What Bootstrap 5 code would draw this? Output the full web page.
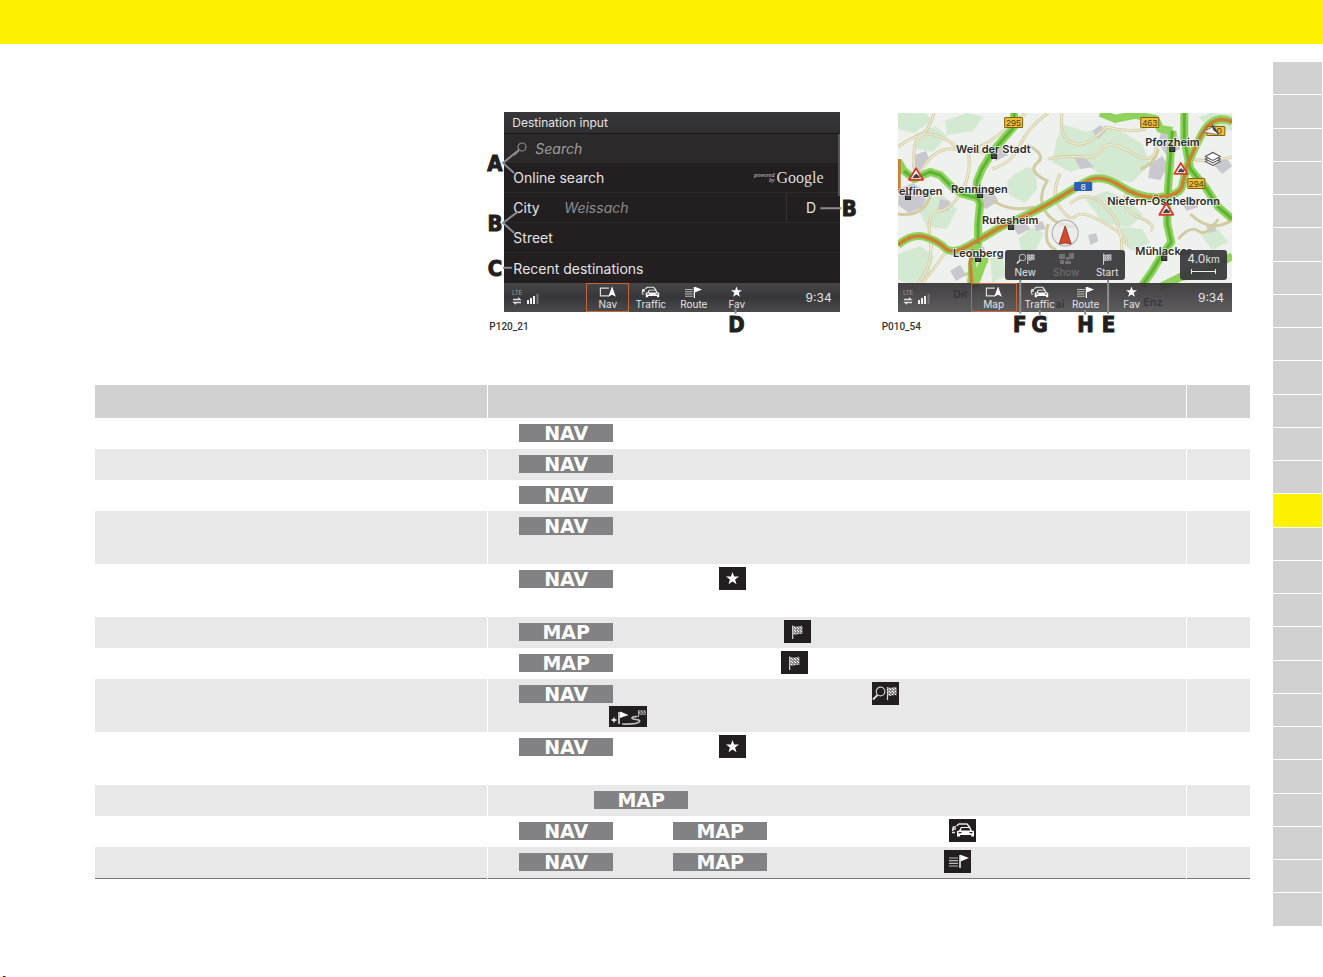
<!DOCTYPE html>
<html lang="en">
<head>
<meta charset="utf-8">
<meta name="viewport" content="width=device-width, initial-scale=1">
<title>Navigation – quick reference</title>
<link href="https://cdn.jsdelivr.net/npm/bootstrap@5.3.0/dist/css/bootstrap.min.css" rel="stylesheet">
<style>
  body { font-family: "Inter", "Liberation Sans", sans-serif; background: #fff; }
  .top-band { height: 44px; background: #fff200; }
  .sheet { padding: 18px 1px 0 95px; gap: 23px; }
  .sheet-body { padding: 50px 0 47px; min-width: 0; }
  .thumb-index { width: 49px; gap: 1px; }
  .thumb-index li { background: #d1d1d1; }
  .thumb-index li.current { background: #fff200; }

  /* figures */
  .figures { display: grid; grid-template-columns: repeat(3, minmax(0, 1fr)); column-gap: 22px; align-items: end; margin-bottom: 51px; }
  .figures figure:first-child { grid-column: 2; }
  .unit { height: 200px; margin: 0 18px 0 17px; background: #231f20; color: #e4e4e4; overflow: hidden; }
  .unit.map-unit { height: 199px; margin: 0 18px; }
  .unit button { background: none; border: 0; padding: 0; color: inherit; }
  .fig-no { font: 500 10px/14px Roboto, sans-serif; padding: 8px 0 0 2px; color: #333; }
  .callouts { left: 0; top: 0; pointer-events: none; overflow: visible; }
  .callouts text { font: bold 22px "Liberation Sans Narrow", "DejaVu Sans Condensed", sans-serif; fill: #231f20; stroke: #231f20; stroke-width: 1; text-anchor: middle; }
  .callouts path { stroke: #8d8d8f; stroke-width: 2; fill: none; }
  .unit-title { height: 22px; font-size: 12px; line-height: 22px; padding-left: 8px; background: linear-gradient(#373638, #2f2e30); border-bottom: 1px solid #1b191a; }
  .unit-row { height: 30px; font-size: 14px; padding-left: 9px; border-bottom: 1px solid #2d292a; }
  .unit-row.find { height: 29px; background: #2b292a; border: 0; }
  .unit-row.last { border: 0; }
  .unit-row input { background: none; border: 0; padding: 0; outline: 0; font-style: italic; color: #8e8c8d; font-size: 14px; min-width: 0; flex: 1; }
  .unit-row input::placeholder { color: #a09e9f; }
  .unit-row label { width: 51px; }
  .unit .land { width: 54px; height: 30px; border-left: 1px solid #343132; padding-right: 4px; }
  .powered { font: italic 6px/5px "Liberation Serif", serif; text-align: right; color: #ccc; }
  .goog { font: 16px/20px "Liberation Serif", serif; padding: 0 16px 0 2px; color: #ddd; }
  .scroller { right: 0; top: 22px; width: 2px; height: 62px; background: #565456; }
  .soft-bar { height: 29px; background: linear-gradient(#464547, #373638 50%, #4a494b); font-size: 10px; line-height: 11px; }
  .soft-bar .status { width: 82px; padding-left: 8px; }
  .soft-bar button { width: 43px; height: 29px; font-size: 10px; line-height: 11px; }
  .soft-bar button.on { border: 1px solid #c4653a; }
  .soft-bar svg { display: block; margin: 0 auto 1px; }
  .soft-bar .status svg { margin: 0; }
  .clock { font-size: 12px; padding-right: 8px; }
  .map-unit .soft-bar { left: 0; right: 0; bottom: 0; background: linear-gradient(rgba(52,50,52,.92), rgba(62,60,62,.82)); }
  .map-unit .soft-bar .status { width: 73px; padding-left: 5px; }
  .map-unit .soft-bar button { width: 46px; }
  .pop { left: 107px; bottom: 32px; width: 120px; height: 30px; border-radius: 3px; background: rgba(58,57,59,.95); }
  .pop button { width: 41px; flex: none; font-size: 10px; line-height: 12px; }
  .pop button:disabled { color: #737173; }
  .pop svg { display: block; margin: 0 auto 1px; }
  .scale-box { right: 5px; bottom: 32px; width: 47px; height: 30px; border-radius: 3px; background: rgba(58,57,59,.95); font-size: 12px; line-height: 18px; }
  .scale-box small { font-size: 10px; }
  .place { font: 600 11px Inter, sans-serif; fill: #2c2c2c; stroke: #fff; stroke-opacity: .6; stroke-width: 2; paint-order: stroke; }
  .shield { font: 500 9px "Liberation Sans", sans-serif; text-anchor: middle; fill: #4d3b08; }

  /* function table */
  .functions { width: 100%; table-layout: fixed; border-bottom: 1px solid #777; }
  .functions .c-name { width: 34%; }
  .functions .c-page { width: 64px; }
  .functions th { height: 33px; background: #d1d1d1; }
  .functions td { height: 31px; padding: 0; vertical-align: top; }
  .functions .tall td { height: 53px; }
  .functions tr > :not(:last-child) { border-right: 1px solid #fff; }
  .functions tbody tr:nth-child(even) td { background: #e8e8e8; }
  .steps { padding: 3px 0 0 31px; height: 27px; }
  .steps.more { padding: 0 0 0 121px; height: 21px; }
  .hardkey { width: 94px; height: 18px; margin-top: 3px; background: #828284; color: #fff; font: bold 19px/18px "DejaVu Sans", sans-serif; text-align: center; flex: none; }
  .glyph { width: 27px; height: 23px; background: #231f20; flex: none; }
  .glyph.wide { width: 38px; height: 21px; }
  .w60 { width: 60px; } .w75 { width: 75px; } .w106 { width: 106px; } .w168 { width: 168px; }
  .w171 { width: 171px; } .w177 { width: 177px; } .w182 { width: 182px; } .w259 { width: 259px; }
  .reg-mark { width: 4px; height: 1px; margin-left: 2px; background: linear-gradient(90deg, #fff200 25%, #222 25% 75%, #0cc 75%); }
</style>
</head>
<body class="d-flex flex-column min-vh-100">

<svg width="0" height="0" class="position-absolute" aria-hidden="true">
  <defs>
    <pattern id="chk" width="3" height="3" patternUnits="userSpaceOnUse"><path d="M0 0h1.5v1.5H0zM1.5 1.5H3V3H1.5z" fill="#fff"/><path d="M1.5 0H3v1.5H1.5zM0 1.5h1.5V3H0z" fill="#8a8889"/></pattern>
    <symbol id="star" viewBox="0 0 12 12"><path fill="#fff" d="M6 0l1.5 4.2H12L8.400 6.900 9.700 11.300 6 8.700 2.300 11.300 3.600 6.900 0 4.200h4.500z"/></symbol>
    <symbol id="flag" viewBox="0 0 11 14"><path d="M.7.5V14" stroke="#ddd" stroke-width="1.200"/><path d="M1 .8q2.500 1.200 4.800.5T10.500 1v8q-2.500-.6-4.700.2T1 9z" fill="url(#chk)"/></symbol>
    <symbol id="find-flag" viewBox="0 0 25 15"><circle cx="8.500" cy="5.500" r="4.300" fill="none" stroke="#ccc" stroke-width="1.200"/><path d="M5.500 9L1 13.500" stroke="#ddd" stroke-width="2"/><path d="M15.500 1v13" stroke="#ddd" stroke-width="1.200"/><path d="M15.500 1q2.500 1 4.500.4t4.500-.2v8q-2.500-.6-4.500.2t-4.500-.2z" fill="url(#chk)"/></symbol>
    <symbol id="via" viewBox="0 0 38 21"><path d="M2.500 14h5M5 11.500v5" stroke="#fff" stroke-width="1.300"/><path d="M10 6v12" stroke="#eee" stroke-width="1.500"/><path d="M11 5.500l8.500 3.500-8.500 3z" fill="#fff"/><path d="M13 18c8 .3 16 0 17.500-2.500 1.200-2.500-7-1.500-7.500-3.500 0-1.600 4-1.200 5.500-1.700" fill="none" stroke="#bbb" stroke-width="1.700"/><path d="M29.500 4v7" stroke="#aaa"/><path d="M30 4h7v5h-7z" fill="url(#chk)" opacity=".65"/></symbol>
    <symbol id="cars" viewBox="0 0 24 14"><path d="M1.500 8l.8-4H5M2 6h3M1 9.500h3M5.500 3L8 1h8l3 3.500" fill="none" stroke="#e8e8e8" stroke-width="1.500"/><path fill="#fff" fill-rule="evenodd" d="M6 8l2-.3L10 4h9l2 3.700 2 .3v5.500h-2.800V12H9v1.500H6zM10.800 5L9.700 7.600h9.600L18.200 5zM7.500 9v1.300h3V9zm11 0v1.300h3V9z"/></symbol>
    <symbol id="route" viewBox="0 0 20 14"><path d="M0 4h9M0 6.700h9M0 9.400h9M0 12h9" stroke="#bbb" stroke-width="1.200"/><path d="M11 1v13" stroke="#fff" stroke-width="1.500"/><path fill="#fff" d="M11.500.8L20 4l-8.500 3.500z"/></symbol>
    <symbol id="here" viewBox="0 0 18 12"><path d="M10.500 2H1.500v8h9" fill="none" stroke="#ddd" stroke-width="1.300"/><path fill="#fff" d="M13.800 0l4 11-4-2-4 2z"/></symbol>
    <symbol id="lens" viewBox="0 0 14 14"><circle cx="9" cy="5" r="4" fill="none" stroke="#8c8a8b" stroke-width="1.200"/><path d="M6 8l-5 5" stroke="#8c8a8b" stroke-width="1.800"/></symbol>
    <symbol id="signal" viewBox="0 0 28 18"><text x="0" y="6" font-size="6.500" fill="#999" font-family="Roboto, sans-serif">LTE</text><path d="M1 10.500h7l-2-1.700M9 13.500H2l2 1.700" fill="none" stroke="#ddd" stroke-width="1.300"/><path d="M15 11h2v4h-2zM18 9h2v6h-2zM21 7h2v8h-2z" fill="#eee"/><path d="M24.500 5h2v10h-2z" fill="#777"/></symbol>
    <symbol id="blocks" viewBox="0 0 15 12"><path fill="#737173" d="M0 1h6v5H0zM1 7h4v4H1zM7 4h3v3H7zM10 0h5v6h-5zM6 8h6v3H6z"/></symbol>
    <symbol id="warn" viewBox="0 0 16 14"><path d="M8 1.200L15 12.800H1z" fill="#fff" stroke="#dc3a2c" stroke-width="1.900" stroke-linejoin="round"/><path d="M4.500 11h7V8.500H10L8.500 6.500 6.500 8z" fill="#444"/></symbol>
  </defs>
</svg>

<header class="top-band flex-shrink-0"></header>

<div class="sheet d-flex">
  <main class="sheet-body flex-grow-1">
    <section class="figures">
      <figure class="position-relative m-0">
        <div class="unit position-relative">
          <div class="unit-title">Destination input</div>
          <div class="unit-row find d-flex align-items-center">
            <svg width="14" height="14" class="me-2 flex-shrink-0"><use href="#lens"/></svg>
            <input type="search" placeholder="Search" aria-label="Search">
          </div>
          <div class="unit-row d-flex align-items-center"><button type="button" class="me-auto">Online search</button><span class="powered">powered<br>by</span><span class="goog">Google</span></div>
          <div class="unit-row d-flex align-items-center"><label for="city">City</label><input id="city" type="text" value="Weissach"><button type="button" class="land">D</button></div>
          <div class="unit-row d-flex align-items-center"><button type="button">Street</button></div>
          <div class="unit-row last d-flex align-items-center"><button type="button">Recent destinations</button></div>
          <div class="scroller position-absolute"></div>
          <div class="soft-bar d-flex align-items-center">
            <span class="status"><svg width="28" height="18"><use href="#signal"/></svg></span>
            <button type="button" class="on"><svg width="17" height="12"><use href="#here"/></svg>Nav</button>
            <button type="button"><svg width="19" height="12"><use href="#cars"/></svg>Traffic</button>
            <button type="button"><svg width="17" height="12"><use href="#route"/></svg>Route</button>
            <button type="button"><svg width="11" height="12"><use href="#star"/></svg>Fav</button>
            <span class="clock ms-auto">9:34</span>
          </div>
        </div>
        <figcaption class="fig-no">P120_21</figcaption>
        <svg class="callouts position-absolute w-100" viewBox="487 112 371 222">
          <path d="M519 150L503 163L514 173M518 212L503 223L514 233M503 268H512M821 208.500H842M736 309V314"/>
          <text x="495" y="171">A</text><text x="495" y="231">B</text><text x="495" y="276">C</text><text x="850" y="216">B</text><text x="737" y="332">D</text>
        </svg>
      </figure>

      <figure class="position-relative m-0">
        <div class="unit map-unit position-relative">
          <svg class="w-100 h-100 d-block" viewBox="898 114 334 199" preserveAspectRatio="xMidYMid slice">
            <path fill="#eff1ee" d="M898 114h334v199H898z"/>
            <g fill="#d3e9d2">
              <path d="M898 114h28l6 8-18 12-16-4zM915 135l20-8 12 10-14 16-20-4zM945 122l22-8 16 4-10 14-26 4zM1015 175l12-7 8 2 2 20-12 14-16-8-2-14zM1062 125l24 8 18-6 22 8 16 10 8 20-18 18-24-2-20-14-18 6-18-10 4-20zM898 255l22-8 14 10-6 20-16 8-14-4zM1018 240l14-12 12 6-8 16-14 4zM1085 200l22-8 22 10 14 14-14 12-26-4zM1198 118l14-4 20 2v16l-22-4zM1200 235l16-6 12 14-16 8zM925 200l18-4 14 14-10 20-20-2-8-16zM1122 228l20 2 8 14-18 8-12-10zM990 258l12-4 4 22-14 8z"/>
            </g>
            <g fill="#c9c8ce">
              <path d="M914 156l12-4 4 10-10 10-8-4zM988 150l14-2 6 8-12 6zM978 186l14 4 6 12-12 8-12-8zM899 190l14-6 14 10-4 14-14 6-11-8zM940 200l10 2-2 10-10-2zM1150 165l12-8 6 10-8 14-12-2zM1162 128l14 4 4 18-14 6-8-12zM1074 158l12 2 8 8-14 2zM1092 132l8-6 6 6-8 8zM1010 224l14-4 6 10-12 6zM950 272l10-6 6 10-10 6zM1034 226l8-4 4 8-10 2zM1180 200l12-2 6 10-12 4zM1212 165l14-6 6 8-10 8zM1088 236l8-2 2 8-8 4zM1206 226l8-2 2 8-8 2zM968 246l16 2 2 12-14 4z"/>
            </g>
            <g fill="none" stroke="#d2cca4" stroke-width="3">
              <path d="M934 114q-4 16-14 24t-4 40M898 148q22-16 36-12t22 12q20 6 40-10t30-24M918 178q14-30 36-28t32 4M968 150q4 24-6 42t-24 20-6 38M1048 114q-20 14-28 32t-28 24M1027 146q20 10 10 18t10 18q-10 16-2 30t30 16M1048 160q20-4 34-2t20-8 30 4 24-8M1062 114q-4 24 10 30t34-16q20 6 40 2M1060 175q-10 20 0 34t16 8 30 8 20 22M1048 225q-6 20 8 26M1070 205q14-14 30-2t20 30-2 40M1128 190q-10 20 10 28t12 14M1190 160q20 4 42-2M1190 215q20 20 42 6M1178 240q12-14 20-8t20-12M930 240q4 26-12 44M948 250q-14 20-26 34M988 262q-14 10-24 14M898 215q26 4 34-22M990 200q20 14 44 8M1140 170q14-4 18-20"/>
            </g>
            <g fill="none" stroke="#f0ecd4" stroke-width="1.300">
              <path d="M934 114q-4 16-14 24t-4 40M898 148q22-16 36-12t22 12q20 6 40-10t30-24M918 178q14-30 36-28t32 4M968 150q4 24-6 42t-24 20-6 38M1048 114q-20 14-28 32t-28 24M1048 160q20-4 34-2t20-8 30 4 24-8M1062 114q-4 24 10 30t34-16q20 6 40 2M1060 175q-10 20 0 34t16 8 30 8 20 22M1070 205q14-14 30-2t20 30-2 40M1128 190q-10 20 10 28t12 14M1190 160q20 4 42-2M930 240q4 26-12 44M948 250q-14 20-26 34"/>
            </g>
            <g fill="none" stroke-linejoin="round">
              <g stroke="#8fd35c" stroke-width="8">
                <path d="M1014 114v14l-9 10-12 14-11 18-5 12-1 13 4 10-2 20v20l-5 12-2 28M985 258l-12 32M898 162l6 10 10 8 16-7 10 3 12 12 10 7 15 4M1184 114v26l6 30 15 18 13 20 14 12M1172 132l-2 28-3 40v25l4 18-10 14-9 15-10 14M1100 114l15 6 20-4 20 4 5 10 12 2M1160 288l20-10 20-3 32-18"/>
                <path d="M898 246q14-12 27-8t20 11 23-2 24-14 28-14 35-18 30-18 35 4 40 11 22-11 4-17 14-32 32-15"/>
              </g>
              <path stroke="#5cb335" stroke-width="3" d="M1014 114v14l-9 10-12 14-11 18-5 12-1 13 4 10-2 20v20M904 172l10 8 16-7 10 3 12 12 10 7 15 4M1184 114v26l6 30 15 18 13 20 14 12M1172 132l-2 28-3 40v25l4 18-10 14-9 15-10 14"/>
              <path stroke="#cc8034" stroke-width="3.500" d="M898 246q14-12 27-8t20 11 23-2 24-14 28-14 35-18 30-18 35 4 40 11 22-11 4-17 14-32 32-15M973 250l-3 14 2 24M899 160v34"/>
            </g>
            <circle cx="1065" cy="234" r="13" fill="#e9e9e9" fill-opacity=".7" stroke="#aaa"/>
            <path d="M1065 227l6 18-6-1-6 1z" fill="#d54a2c" stroke="#8f2a18" stroke-width=".8"/>
            <g fill="#444" stroke="#222"><path d="M991.500 154.500h5v5h-5zM905.500 195.500h5v5h-5zM977.500 193.500h5v5h-5zM1008.500 225.500h5v5h-5zM975.500 257.500h5v5h-5zM1169.500 147.500h5v5h-5zM1161.500 256.500h5v5h-5z"/></g>
            <g class="place">
              <text x="956" y="154">Weil der Stadt</text><text x="899" y="196">elfingen</text><text x="951" y="194">Renningen</text><text x="982" y="225">Rutesheim</text><text x="953" y="258">Leonberg</text><text x="1145" y="147">Pforzheim</text><text x="1107" y="206">Niefern-Öschelbronn</text><text x="1135" y="256">Mühlacker</text>
              <text x="953" y="299">Dit</text><text x="1055" y="309">ai</text><text x="1143" y="307">Enz</text>
            </g>
            <g stroke="#7d6310" fill="#f0bd3a"><rect x="1004.500" y="118.500" width="18" height="10" rx="1"/><rect x="1140.500" y="118.500" width="18" height="10" rx="1"/><rect x="1206.500" y="127.500" width="18" height="9" rx="1"/><rect x="1187.500" y="179.500" width="17" height="10" rx="1"/></g>
            <rect x="1074" y="183" width="18" height="9" rx="1" fill="#2a5fb4"/>
            <g class="shield"><text x="1013.500" y="127">295</text><text x="1149.500" y="127">463</text><text x="1219" y="135">0</text><text x="1196" y="188">294</text><text x="1083" y="191" style="fill:#fff">8</text></g>
            <use href="#warn" x="908" y="168" width="16" height="14"/><use href="#warn" x="1173" y="162" width="15" height="15"/><use href="#warn" x="1158" y="203" width="16" height="14"/>
            <path d="M1203 133l11-6 4 9z" fill="#f2f2f2" stroke="#666" stroke-width=".8"/><path d="M1211 124l8 12-6-5z" fill="#333"/>
            <g fill="#fff" stroke="#555"><path d="M1205 162.500l7.500-4 7.500 4-7.500 4z"/><path d="M1205 160l7.500-4 7.500 4-7.500 4z"/><path d="M1205 157.500l7.500-4 7.500 4-7.500 4z"/></g>
          </svg>
          <div class="pop position-absolute d-flex">
            <button type="button"><svg width="19" height="12"><use href="#find-flag"/></svg>New</button>
            <button type="button" disabled><svg width="15" height="12"><use href="#blocks"/></svg>Show</button>
            <button type="button"><svg width="9" height="12"><use href="#flag"/></svg>Start</button>
          </div>
          <div class="scale-box position-absolute text-center">4.0<small>km</small><svg width="27" height="7" class="d-block mx-auto"><path d="M1 3.500h25M1.500 1v5M25.500 1v5" stroke="#eee"/></svg></div>
          <div class="soft-bar position-absolute d-flex align-items-center">
            <span class="status"><svg width="28" height="18"><use href="#signal"/></svg></span>
            <button type="button" class="on"><svg width="17" height="12"><use href="#here"/></svg>Map</button>
            <button type="button"><svg width="19" height="12"><use href="#cars"/></svg>Traffic</button>
            <button type="button"><svg width="17" height="12"><use href="#route"/></svg>Route</button>
            <button type="button"><svg width="11" height="12"><use href="#star"/></svg>Fav</button>
            <span class="clock ms-auto">9:34</span>
          </div>
        </div>
        <figcaption class="fig-no">P010_54</figcaption>
        <svg class="callouts position-absolute w-100" viewBox="880 114 371 221">
          <path d="M1020.500 281V315M1108.500 281V315M1040 311V316M1085.500 311V316"/>
          <text x="1020" y="333">F</text><text x="1040" y="333">G</text><text x="1086" y="333">H</text><text x="1109" y="333">E</text>
        </svg>
      </figure>
    </section>

    <table class="functions">
      <colgroup><col class="c-name"><col><col class="c-page"></colgroup>
      <thead><tr><th></th><th></th><th></th></tr></thead>
      <tbody>
        <tr><td></td><td><div class="steps d-flex"><span class="hardkey">NAV</span></div></td><td></td></tr>
        <tr><td></td><td><div class="steps d-flex"><span class="hardkey">NAV</span></div></td><td></td></tr>
        <tr><td></td><td><div class="steps d-flex"><span class="hardkey">NAV</span></div></td><td></td></tr>
        <tr class="tall"><td></td><td><div class="steps d-flex"><span class="hardkey">NAV</span></div></td><td></td></tr>
        <tr class="tall"><td></td><td><div class="steps d-flex"><span class="hardkey">NAV</span><span class="w106"></span><svg class="glyph"><use href="#star" x="7" y="5" width="13" height="13"/></svg></div></td><td></td></tr>
        <tr><td></td><td><div class="steps d-flex"><span class="hardkey">MAP</span><span class="w171"></span><svg class="glyph"><use href="#flag" x="8" y="5" width="11" height="14"/></svg></div></td><td></td></tr>
        <tr><td></td><td><div class="steps d-flex"><span class="hardkey">MAP</span><span class="w168"></span><svg class="glyph"><use href="#flag" x="8" y="5" width="11" height="14"/></svg></div></td><td></td></tr>
        <tr class="tall"><td></td><td><div class="steps d-flex"><span class="hardkey">NAV</span><span class="w259"></span><svg class="glyph"><use href="#find-flag" x="0" y="4" width="25" height="15"/></svg></div><div class="steps more d-flex"><svg class="glyph wide"><use href="#via" width="38" height="21"/></svg></div></td><td></td></tr>
        <tr class="tall"><td></td><td><div class="steps d-flex"><span class="hardkey">NAV</span><span class="w106"></span><svg class="glyph"><use href="#star" x="7" y="5" width="13" height="13"/></svg></div></td><td></td></tr>
        <tr><td></td><td><div class="steps d-flex"><span class="w75"></span><span class="hardkey">MAP</span></div></td><td></td></tr>
        <tr><td></td><td><div class="steps d-flex"><span class="hardkey">NAV</span><span class="w60"></span><span class="hardkey">MAP</span><span class="w182"></span><svg class="glyph"><use href="#cars" x="2" y="4" width="24" height="14"/></svg></div></td><td></td></tr>
        <tr><td></td><td><div class="steps d-flex"><span class="hardkey">NAV</span><span class="w60"></span><span class="hardkey">MAP</span><span class="w177"></span><svg class="glyph"><use href="#route" x="5" y="4" width="20" height="14"/></svg></div></td><td></td></tr>
      </tbody>
    </table>
  </main>

  <ul class="thumb-index list-unstyled m-0 d-flex flex-column flex-shrink-0">
    <li class="flex-fill"></li><li class="flex-fill"></li><li class="flex-fill"></li><li class="flex-fill"></li><li class="flex-fill"></li><li class="flex-fill"></li><li class="flex-fill"></li><li class="flex-fill"></li><li class="flex-fill"></li><li class="flex-fill"></li><li class="flex-fill"></li><li class="flex-fill"></li><li class="flex-fill"></li>
    <li class="flex-fill current"></li>
    <li class="flex-fill"></li><li class="flex-fill"></li><li class="flex-fill"></li><li class="flex-fill"></li><li class="flex-fill"></li><li class="flex-fill"></li><li class="flex-fill"></li><li class="flex-fill"></li><li class="flex-fill"></li><li class="flex-fill"></li><li class="flex-fill"></li><li class="flex-fill"></li>
  </ul>
</div>

<footer class="mt-auto"><div class="reg-mark"></div></footer>
<script src="https://cdn.jsdelivr.net/npm/bootstrap@5.3.0/dist/js/bootstrap.bundle.min.js"></script>
</body>
</html>
